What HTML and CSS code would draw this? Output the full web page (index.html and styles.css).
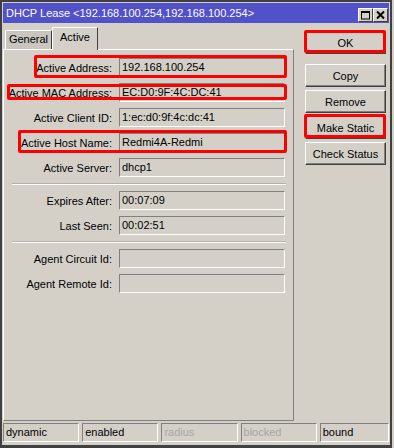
FILE: index.html
```html
<!DOCTYPE html>
<html lang="en">
<head>
    <meta charset="UTF-8">
    <meta name="viewport" content="width=device-width, initial-scale=1.0">
    <title>DHCP Lease</title>
    <link rel="stylesheet" href="styles.css">
</head>
<body>
    <div class="window">
        <div class="titlebar">
            <span class="title-text">DHCP Lease &lt;192.168.100.254,192.168.100.254&gt;</span>
            <span class="title-btn">
                <svg width="11" height="10" viewBox="0 0 11 10"><rect x="1.5" y="1.5" width="8" height="7.5" fill="none" stroke="#000" stroke-width="1"/><rect x="1" y="1" width="9" height="2" fill="#000"/></svg>
            </span>
            <span class="title-btn">
                <svg width="11" height="10" viewBox="0 0 11 10"><path d="M2 1.5 L9 8.5 M9 1.5 L2 8.5" stroke="#000" stroke-width="2"/></svg>
            </span>
        </div>
        <div class="content">
            <div class="left">
                <div class="tabs">
                    <span class="tab">General</span>
                    <span class="tab active">Active</span>
                </div>
                <div class="panel">
                    <div class="row"><span class="label">Active Address:</span><span class="field">192.168.100.254</span></div>
                    <div class="row"><span class="label">Active MAC Address:</span><span class="field">EC:D0:9F:4C:DC:41</span></div>
                    <div class="row"><span class="label">Active Client ID:</span><span class="field">1:ec:d0:9f:4c:dc:41</span></div>
                    <div class="row"><span class="label">Active Host Name:</span><span class="field">Redmi4A-Redmi</span></div>
                    <div class="row"><span class="label">Active Server:</span><span class="field">dhcp1</span></div>
                    <div class="separator"></div>
                    <div class="row"><span class="label">Expires After:</span><span class="field">00:07:09</span></div>
                    <div class="row"><span class="label">Last Seen:</span><span class="field">00:02:51</span></div>
                    <div class="separator"></div>
                    <div class="row"><span class="label">Agent Circuit Id:</span><span class="field"></span></div>
                    <div class="row"><span class="label">Agent Remote Id:</span><span class="field"></span></div>
                </div>
            </div>
            <div class="buttons">
                <button class="btn btn-ok">OK</button>
                <button class="btn">Copy</button>
                <button class="btn">Remove</button>
                <button class="btn">Make Static</button>
                <button class="btn">Check Status</button>
            </div>
        </div>
        <div class="statusbar">
            <span class="cell">dynamic</span>
            <span class="cell">enabled</span>
            <span class="cell disabled">radius</span>
            <span class="cell disabled">blocked</span>
            <span class="cell last">bound</span>
        </div>

        <!-- red annotation frames -->
        <div class="mark mark-address"></div>
        <div class="mark mark-mac"></div>
        <div class="mark mark-host"></div>
        <div class="mark mark-ok"></div>
        <div class="mark mark-static"></div>
    </div>
</body>
</html>
```

FILE: styles.css
```css
* {
    box-sizing: border-box;
}
html, body {
    margin: 0;
    padding: 0;
}
body {
    width: 394px;
    height: 448px;
    overflow: hidden;
    background-color: #d4d0c8;
    font-family: "Liberation Sans", Arial, sans-serif;
    font-size: 11px;
    color: #000;
}
.window {
    position: relative;
    width: 392px;
    height: 448px;
    padding: 1px 1px 3px 1px;
    border: 2px solid #404040;
    border-bottom-width: 3px;
    background-color: #d4d0c8;
}

/* title bar */
.titlebar {
    display: flex;
    align-items: center;
    height: 20px;
    padding: 0 1px 0 3px;
    background-color: #5151c9;
    color: #fff;
}
.title-text {
    flex: 1;
    white-space: nowrap;
}
.title-btn {
    display: flex;
    align-items: center;
    justify-content: center;
    width: 15px;
    height: 14px;
    margin-left: 0px;
    margin-top: 3px;
    background-color: #d4d0c8;
    border: 1px solid;
    border-color: #fff #404040 #404040 #fff;
}

.content {
    display: flex;
    gap: 11px;
}
.left {
    width: 291px;
}

/* tabs */
.tabs {
    display: flex;
    align-items: flex-end;
    height: 22px;
    margin-top: 4px;
    padding-left: 2px;
}
.tab {
    position: relative;
    height: 19px;
    width: 47px;
    line-height: 17px;
    text-align: center;
    border: 1px solid;
    border-bottom: none;
    border-color: #fff #404040 #404040 #fff;
    background-color: #c9c6bf;
}
.tab.active {
    height: 23px;
    width: 46px;
    margin-bottom: -1px;
    line-height: 19px;
    background-color: #d4d0c8;
    z-index: 1;
}

.panel {
    height: 372px;
    padding-top: 8px;
    border: 1px solid;
    border-color: #fff #808080 #808080 #fff;
}
.row {
    display: grid;
    grid-template-columns: 108px 166px;
    column-gap: 7px;
    align-items: center;
    height: 19px;
    margin-bottom: 6px;
}
.label {
    text-align: right;
    white-space: nowrap;
}
.field {
    height: 19px;
    padding-left: 2px;
    line-height: 17px;
    border: 1px solid;
    border-color: #808080 #fff #fff #808080;
    white-space: nowrap;
}
.separator {
    height: 2px;
    margin: 2px 7px 6px 8px;
    border-top: 1px solid #b4b0a8;
    border-bottom: 1px solid #fff;
}

/* right buttons */
.buttons {
    display: flex;
    flex-direction: column;
    gap: 3px;
    width: 81px;
    padding-top: 8px;
}
.btn {
    height: 23px;
    padding: 0;
    font-family: inherit;
    font-size: 11px;
    color: #000;
    background-color: #d4d0c8;
    border: 1px solid;
    border-color: #fff #404040 #404040 #fff;
    box-shadow: inset -1px -1px 0 #808080;
}
.btn-ok {
    margin-bottom: 7px;
}

/* status bar */
.statusbar {
    display: flex;
    gap: 3px;
    margin-top: 2px;
}
.cell {
    width: 77px;
    height: 19px;
    padding-left: 2px;
    line-height: 17px;
    border: 1px solid;
    border-color: #808080 #fff #fff #808080;
}
.cell.last {
    width: 70px;
}
.cell.disabled {
    color: #a6a6a6;
}

/* red frames drawn over the dialog */
.mark {
    position: absolute;
    border: 3px solid #ff0000;
    border-radius: 2px;
}
.mark-address {
    left: 32px;
    top: 53px;
    width: 253px;
    height: 23px;
}
.mark-mac {
    left: 5px;
    top: 82px;
    width: 280px;
    height: 16px;
}
.mark-host {
    left: 16px;
    top: 128px;
    width: 269px;
    height: 23px;
}
.mark-ok {
    left: 302px;
    top: 28px;
    width: 82px;
    height: 23px;
}
.mark-static {
    left: 302px;
    top: 112px;
    width: 82px;
    height: 24px;
}
```
